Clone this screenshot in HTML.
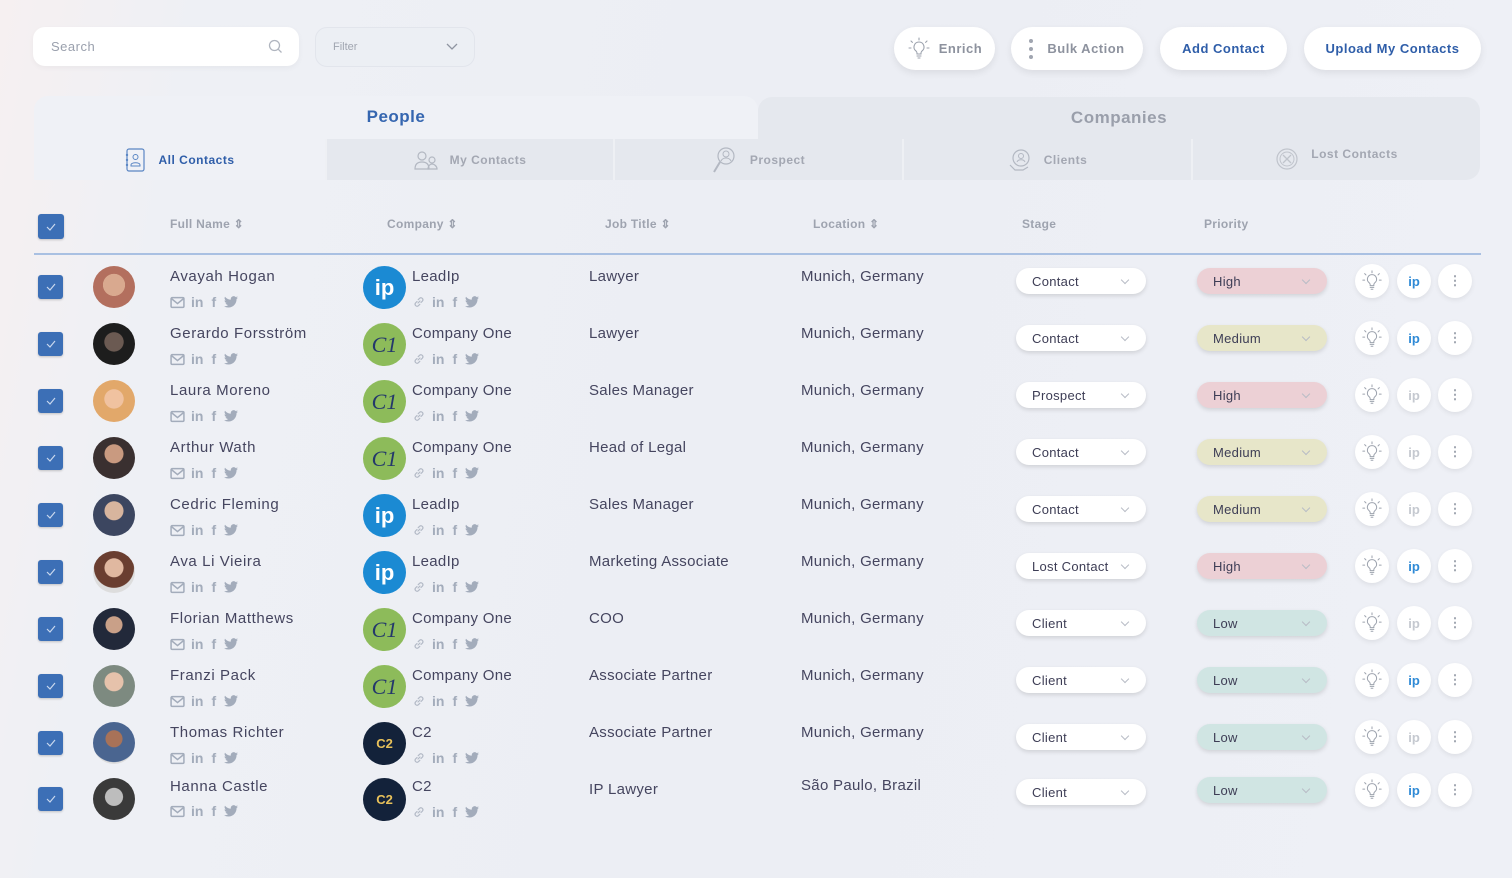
<!DOCTYPE html>
<html><head><meta charset="utf-8"><style>
*{box-sizing:border-box;margin:0;padding:0}
body{width:1512px;height:878px;overflow:hidden;font-family:"Liberation Sans",sans-serif;background:linear-gradient(100deg,#f6f0f1 0%,#eef0f5 12%,#eceef4 50%,#eef0f6 100%);position:relative;color:#3d3d55}
.abs{position:absolute}
.search{left:33px;top:27px;width:266px;height:39px;background:#fff;border-radius:12px;box-shadow:0 2px 6px rgba(0,0,0,.04)}
.search span{position:absolute;left:18px;top:12px;font-size:13px;color:#9aa0ad;letter-spacing:.5px}
.filter{left:315px;top:27px;width:160px;height:40px;border:1px solid #e2e5ec;border-radius:12px;background:#eceff4}
.filter span{position:absolute;left:17px;top:13px;font-size:11px;color:#a0a5b0}
.btn{top:27px;height:43px;background:#fff;border-radius:22px;box-shadow:0 3px 8px rgba(0,0,0,.08);font-size:13px;font-weight:bold;letter-spacing:.5px;display:flex;align-items:center;justify-content:center}
.tabs{left:34px;top:96px;width:1446px;height:84px}
.tp{left:34px;top:96px;width:724px;height:44px;background:#eff1f6;border-radius:14px 14px 0 0;text-align:center;font-size:17px;font-weight:bold;color:#3566b0;padding-top:11px;letter-spacing:.5px}
.tc{left:758px;top:97px;width:722px;height:43px;background:#e5e8ee;border-radius:14px 14px 0 0;text-align:center;font-size:17px;font-weight:bold;color:#9a9fab;padding-top:11px;letter-spacing:.5px}
.sub{top:139px;height:41px;background:#e5e8ee;border-left:2px solid #eef0f4;display:flex;align-items:center;justify-content:center;font-size:12px;font-weight:bold;color:#a3a7b2;letter-spacing:.5px;gap:12px}
.th{top:217px;font-size:12px;color:#9ea3af;font-weight:bold;letter-spacing:.3px}
.cb{width:25px;height:24px;background:#3c6fb6;border-radius:3px;display:flex;align-items:center;justify-content:center;box-shadow:0 1px 2px rgba(0,0,0,.2)}
.row{position:absolute;left:0;width:1512px;height:60px}
.row .cb{position:absolute;left:38px;top:16px}
.av{position:absolute;left:93px;top:7px;width:42px;height:42px;border-radius:50%}
.nm{position:absolute;left:170px;top:9px;font-size:15px;color:#45455f;letter-spacing:.6px}
.ic{position:absolute;top:35px;display:flex;align-items:center;gap:6px;color:#a3acbb;font-size:14px;font-weight:bold}
.lg{position:absolute;left:363px;top:7px;width:43px;height:43px;border-radius:50%;display:flex;align-items:center;justify-content:center;color:#fff;font-weight:bold}
.lp{background:#1b8ad3;font-size:22px}
.c1{background:#8dbb5a;color:#24386b;font-family:"Liberation Serif",serif;font-style:italic;font-size:22px;font-weight:normal}
.c2{background:#13223a;color:#e8c15a;font-size:13px}
.co{position:absolute;left:412px;top:9px;font-size:15px;color:#45455f;letter-spacing:.3px}
.jb{position:absolute;left:589px;top:9px;font-size:15px;color:#45455f;letter-spacing:.3px}
.lc{position:absolute;left:801px;top:9px;font-size:15px;color:#45455f;letter-spacing:.3px}
.pill{position:absolute;top:9px;width:130px;height:26px;border-radius:13px;box-shadow:0 2px 4px rgba(0,0,0,.12);font-size:13px;color:#3d3d55;padding:6px 0 0 16px;letter-spacing:.3px}
.pill:after{content:"";position:absolute;right:18px;top:9px;width:5px;height:5px;border-right:1px solid #b8bcc6;border-bottom:1px solid #b8bcc6;transform:rotate(45deg)}
.st{left:1016px;background:#fff}
.hi{left:1197px;background:#ecd0d5}
.me{left:1197px;background:#e7e6c9}
.lo{left:1197px;background:#d0e5e3}
.ac{position:absolute;top:5px;width:34px;height:34px;border-radius:50%;background:#fff;box-shadow:0 2px 5px rgba(0,0,0,.07);display:flex;align-items:center;justify-content:center;font-weight:bold;font-size:13px}
</style></head><body>
<svg width="0" height="0" style="position:absolute"><defs>
<symbol id="bulb" viewBox="0 0 24 24"><path d="M12 5a5 5 0 0 0-3 9c.7.6 1 1.3 1 2v1h4v-1c0-.7.3-1.4 1-2a5 5 0 0 0-3-9zM10 19h4M11 21h2M12 1v2M4 4l1.4 1.4M20 4l-1.4 1.4M2 11h2M20 11h2" fill="none" stroke="#9ca2ad" stroke-width="1.1" stroke-linecap="round"/></symbol>
<symbol id="env" viewBox="0 0 14 12"><rect x="1" y="1.5" width="12" height="9" rx="1" fill="none" stroke="#a3acbb" stroke-width="1.4"/><path d="M1.5 2.5L7 7l5.5-4.5" fill="none" stroke="#a3acbb" stroke-width="1.4"/></symbol>
<symbol id="lnk" viewBox="0 0 14 14"><path d="M6 8l2-2M5 6.5L3.5 8a2 2 0 0 0 2.8 2.8L7.8 9.3M9 7.5l1.5-1.5A2 2 0 0 0 7.7 3.2L6.2 4.7" fill="none" stroke="#b3bac6" stroke-width="1.2" stroke-linecap="round"/></symbol>
<symbol id="tw" viewBox="0 0 24 20"><path d="M24 2.4a10 10 0 0 1-2.8.8A5 5 0 0 0 23.3.4a9.8 9.8 0 0 1-3.1 1.2A4.9 4.9 0 0 0 11.8 6 14 14 0 0 1 1.7.9a4.9 4.9 0 0 0 1.5 6.6A4.9 4.9 0 0 1 1 6.9a4.9 4.9 0 0 0 3.9 4.8 5 5 0 0 1-2.2.1 4.9 4.9 0 0 0 4.6 3.4A9.9 9.9 0 0 1 0 17.3 14 14 0 0 0 7.5 19.5c9 0 14-7.5 14-14v-.6A10 10 0 0 0 24 2.4z" fill="#a3acbb"/></symbol>
<symbol id="chk" viewBox="0 0 12 10"><path d="M2 5l3 3 5-6" fill="none" stroke="#c9d8ee" stroke-width="1.2"/></symbol>
</defs></svg>

<div class="abs search"><span>Search</span><svg class="abs" style="left:235px;top:12px" width="15" height="15" viewBox="0 0 15 15"><circle cx="6.5" cy="6.5" r="5" fill="none" stroke="#b0b5bf" stroke-width="1.3"/><path d="M10.2 10.2L13.5 13.5" stroke="#b0b5bf" stroke-width="1.3"/></svg></div>
<div class="abs filter"><span>Filter</span><svg class="abs" style="left:130px;top:14px" width="12" height="10"><path d="M1 2l5 5 5-5" fill="none" stroke="#8f95a1" stroke-width="1.3"/></svg></div>

<div class="abs btn" style="left:894px;width:101px;color:#8d929e;gap:8px"><svg width="24" height="24"><use href="#bulb"/></svg>Enrich</div>
<div class="abs btn" style="left:1011px;width:132px;color:#8d929e;gap:14px"><svg width="4" height="22"><circle cx="2" cy="3" r="2" fill="#a0a5b0"/><circle cx="2" cy="11" r="2" fill="#a0a5b0"/><circle cx="2" cy="19" r="2" fill="#a0a5b0"/></svg>Bulk Action</div>
<div class="abs btn" style="left:1160px;width:127px;color:#2f5ea9">Add Contact</div>
<div class="abs btn" style="left:1304px;width:177px;color:#2f5ea9">Upload My Contacts</div>

<div class="abs tc">Companies</div>
<div class="abs tp">People</div>
<div class="abs sub" style="left:34px;width:291px;background:#eff1f6;border-left:none;color:#2f5ea9"><svg width="22" height="24" viewBox="0 0 22 24"><rect x="3" y="1" width="17" height="22" rx="2" fill="none" stroke="#5a86c4" stroke-width="1.2"/><circle cx="11.5" cy="9" r="2.5" fill="none" stroke="#5a86c4"/><path d="M7 17c0-3 9-3 9 0v1H7z" fill="none" stroke="#5a86c4"/><circle cx="3" cy="7" r="1.2" fill="#5a86c4"/><circle cx="3" cy="12" r="1.2" fill="#5a86c4"/><circle cx="3" cy="17" r="1.2" fill="#5a86c4"/></svg>All Contacts</div>
<div class="abs sub" style="left:325px;width:288px"><svg width="24" height="20" viewBox="0 0 24 20"><circle cx="8" cy="6" r="4" fill="none" stroke="#b3b8c2" stroke-width="1.2"/><path d="M1 19c0-5 3-7 7-7s7 2 7 7z" fill="none" stroke="#b3b8c2" stroke-width="1.2"/><circle cx="18" cy="10" r="3" fill="none" stroke="#b3b8c2" stroke-width="1.2"/><path d="M14 19c0-3 2-5 4-5s5 2 5 5z" fill="none" stroke="#b3b8c2" stroke-width="1.2"/></svg>My Contacts</div>
<div class="abs sub" style="left:613px;width:289px;gap:14px"><svg width="24" height="28" viewBox="0 0 24 28"><circle cx="14" cy="10" r="8" fill="none" stroke="#b3b8c2" stroke-width="1.2"/><circle cx="14" cy="8" r="3" fill="none" stroke="#b3b8c2"/><path d="M9 15c2-4 8-4 10 0" fill="none" stroke="#b3b8c2"/><path d="M8 16L2 26" stroke="#b3b8c2" stroke-width="2"/></svg>Prospect</div>
<div class="abs sub" style="left:902px;width:289px"><svg width="24" height="24" viewBox="0 0 24 24"><circle cx="13" cy="10" r="8" fill="none" stroke="#b3b8c2" stroke-width="1.2"/><circle cx="13" cy="8" r="2.5" fill="none" stroke="#b3b8c2"/><path d="M9 14c1-3 7-3 8 0" fill="none" stroke="#b3b8c2"/><path d="M2 17l5 5h8l5-3" fill="none" stroke="#b3b8c2" stroke-width="1.2"/></svg>Clients</div>
<div class="abs sub" style="left:1191px;width:289px;border-radius:0 0 14px 0;align-items:flex-start;padding-top:8px"><svg width="24" height="24" viewBox="0 0 24 24"><circle cx="12" cy="12" r="10" fill="none" stroke="#c0c4cc" stroke-width="1.2"/><circle cx="12" cy="12" r="7" fill="none" stroke="#c0c4cc"/><path d="M8 8l8 8M16 8l-8 8" stroke="#c0c4cc" stroke-width="1.3"/></svg>Lost Contacts</div>

<div class="abs cb" style="left:38px;top:214px;width:26px;height:25px"><svg width="12" height="10"><use href="#chk"/></svg></div>
<div class="abs th" style="left:170px">Full Name ⇕</div>
<div class="abs th" style="left:387px">Company ⇕</div>
<div class="abs th" style="left:605px">Job Title ⇕</div>
<div class="abs th" style="left:813px">Location ⇕</div>
<div class="abs th" style="left:1022px">Stage</div>
<div class="abs th" style="left:1204px">Priority</div>
<div class="abs" style="left:34px;top:253px;width:1447px;height:2px;background:#a9c0e2"></div>

<!-- rows -->
<div class="row" style="top:259px"><div class="cb"><svg width="12" height="10"><use href="#chk"/></svg></div><div class="av" style="background:radial-gradient(circle at 50% 45%,#d9a98f 0 35%,#b36f5e 36% 100%)"></div><div class="nm">Avayah Hogan</div><div class="ic" style="left:170px"><svg width="15" height="13"><use href="#env"/></svg>in<span style="margin:0 2px">f</span><svg width="14" height="12"><use href="#tw"/></svg></div><div class="lg lp">ip</div><div class="co">LeadIp</div><div class="ic" style="left:412px"><svg width="14" height="14"><use href="#lnk"/></svg>in<span style="margin:0 2px">f</span><svg width="14" height="12"><use href="#tw"/></svg></div><div class="jb">Lawyer</div><div class="lc">Munich, Germany</div><div class="pill st">Contact</div><div class="pill hi">High</div><div class="ac" style="left:1355px"><svg width="22" height="22"><use href="#bulb"/></svg></div><div class="ac" style="left:1397px;color:#2f8ad6">ip</div><div class="ac" style="left:1438px;color:#9ca2ad">⋮</div></div>

<div class="row" style="top:316px"><div class="cb"><svg width="12" height="10"><use href="#chk"/></svg></div><div class="av" style="background:radial-gradient(circle at 50% 45%,#6b5a52 0 30%,#1d1d1d 32% 100%)"></div><div class="nm">Gerardo Forsström</div><div class="ic" style="left:170px"><svg width="15" height="13"><use href="#env"/></svg>in<span style="margin:0 2px">f</span><svg width="14" height="12"><use href="#tw"/></svg></div><div class="lg c1">C1</div><div class="co">Company One</div><div class="ic" style="left:412px"><svg width="14" height="14"><use href="#lnk"/></svg>in<span style="margin:0 2px">f</span><svg width="14" height="12"><use href="#tw"/></svg></div><div class="jb">Lawyer</div><div class="lc">Munich, Germany</div><div class="pill st">Contact</div><div class="pill me">Medium</div><div class="ac" style="left:1355px"><svg width="22" height="22"><use href="#bulb"/></svg></div><div class="ac" style="left:1397px;color:#2f8ad6">ip</div><div class="ac" style="left:1438px;color:#9ca2ad">⋮</div></div>

<div class="row" style="top:373px"><div class="cb"><svg width="12" height="10"><use href="#chk"/></svg></div><div class="av" style="background:radial-gradient(circle at 50% 45%,#f0c2a0 0 30%,#e2a86a 32% 100%)"></div><div class="nm">Laura Moreno</div><div class="ic" style="left:170px"><svg width="15" height="13"><use href="#env"/></svg>in<span style="margin:0 2px">f</span><svg width="14" height="12"><use href="#tw"/></svg></div><div class="lg c1">C1</div><div class="co">Company One</div><div class="ic" style="left:412px"><svg width="14" height="14"><use href="#lnk"/></svg>in<span style="margin:0 2px">f</span><svg width="14" height="12"><use href="#tw"/></svg></div><div class="jb">Sales Manager</div><div class="lc">Munich, Germany</div><div class="pill st">Prospect</div><div class="pill hi">High</div><div class="ac" style="left:1355px"><svg width="22" height="22"><use href="#bulb"/></svg></div><div class="ac" style="left:1397px;color:#c5c9d0">ip</div><div class="ac" style="left:1438px;color:#9ca2ad">⋮</div></div>

<div class="row" style="top:430px"><div class="cb"><svg width="12" height="10"><use href="#chk"/></svg></div><div class="av" style="background:radial-gradient(circle at 50% 40%,#c99a80 0 28%,#3a3030 30% 100%)"></div><div class="nm">Arthur Wath</div><div class="ic" style="left:170px"><svg width="15" height="13"><use href="#env"/></svg>in<span style="margin:0 2px">f</span><svg width="14" height="12"><use href="#tw"/></svg></div><div class="lg c1">C1</div><div class="co">Company One</div><div class="ic" style="left:412px"><svg width="14" height="14"><use href="#lnk"/></svg>in<span style="margin:0 2px">f</span><svg width="14" height="12"><use href="#tw"/></svg></div><div class="jb">Head of Legal</div><div class="lc">Munich, Germany</div><div class="pill st">Contact</div><div class="pill me">Medium</div><div class="ac" style="left:1355px"><svg width="22" height="22"><use href="#bulb"/></svg></div><div class="ac" style="left:1397px;color:#c5c9d0">ip</div><div class="ac" style="left:1438px;color:#9ca2ad">⋮</div></div>

<div class="row" style="top:487px"><div class="cb"><svg width="12" height="10"><use href="#chk"/></svg></div><div class="av" style="background:radial-gradient(circle at 50% 40%,#d8b59e 0 28%,#3c4660 30% 100%)"></div><div class="nm">Cedric Fleming</div><div class="ic" style="left:170px"><svg width="15" height="13"><use href="#env"/></svg>in<span style="margin:0 2px">f</span><svg width="14" height="12"><use href="#tw"/></svg></div><div class="lg lp">ip</div><div class="co">LeadIp</div><div class="ic" style="left:412px"><svg width="14" height="14"><use href="#lnk"/></svg>in<span style="margin:0 2px">f</span><svg width="14" height="12"><use href="#tw"/></svg></div><div class="jb">Sales Manager</div><div class="lc">Munich, Germany</div><div class="pill st">Contact</div><div class="pill me">Medium</div><div class="ac" style="left:1355px"><svg width="22" height="22"><use href="#bulb"/></svg></div><div class="ac" style="left:1397px;color:#c5c9d0">ip</div><div class="ac" style="left:1438px;color:#9ca2ad">⋮</div></div>

<div class="row" style="top:544px"><div class="cb"><svg width="12" height="10"><use href="#chk"/></svg></div><div class="av" style="background:radial-gradient(circle at 50% 40%,#e0b8a0 0 28%,#6a3e30 30% 60%,#ddd 62%)"></div><div class="nm">Ava Li Vieira</div><div class="ic" style="left:170px"><svg width="15" height="13"><use href="#env"/></svg>in<span style="margin:0 2px">f</span><svg width="14" height="12"><use href="#tw"/></svg></div><div class="lg lp">ip</div><div class="co">LeadIp</div><div class="ic" style="left:412px"><svg width="14" height="14"><use href="#lnk"/></svg>in<span style="margin:0 2px">f</span><svg width="14" height="12"><use href="#tw"/></svg></div><div class="jb">Marketing Associate</div><div class="lc">Munich, Germany</div><div class="pill st">Lost Contact</div><div class="pill hi">High</div><div class="ac" style="left:1355px"><svg width="22" height="22"><use href="#bulb"/></svg></div><div class="ac" style="left:1397px;color:#2f8ad6">ip</div><div class="ac" style="left:1438px;color:#9ca2ad">⋮</div></div>

<div class="row" style="top:601px"><div class="cb"><svg width="12" height="10"><use href="#chk"/></svg></div><div class="av" style="background:radial-gradient(circle at 50% 40%,#c9a088 0 25%,#22293a 27% 100%)"></div><div class="nm">Florian Matthews</div><div class="ic" style="left:170px"><svg width="15" height="13"><use href="#env"/></svg>in<span style="margin:0 2px">f</span><svg width="14" height="12"><use href="#tw"/></svg></div><div class="lg c1">C1</div><div class="co">Company One</div><div class="ic" style="left:412px"><svg width="14" height="14"><use href="#lnk"/></svg>in<span style="margin:0 2px">f</span><svg width="14" height="12"><use href="#tw"/></svg></div><div class="jb">COO</div><div class="lc">Munich, Germany</div><div class="pill st">Client</div><div class="pill lo">Low</div><div class="ac" style="left:1355px"><svg width="22" height="22"><use href="#bulb"/></svg></div><div class="ac" style="left:1397px;color:#c5c9d0">ip</div><div class="ac" style="left:1438px;color:#9ca2ad">⋮</div></div>

<div class="row" style="top:658px"><div class="cb"><svg width="12" height="10"><use href="#chk"/></svg></div><div class="av" style="background:radial-gradient(circle at 50% 40%,#e6c2ab 0 28%,#7d8a80 30% 100%)"></div><div class="nm">Franzi Pack</div><div class="ic" style="left:170px"><svg width="15" height="13"><use href="#env"/></svg>in<span style="margin:0 2px">f</span><svg width="14" height="12"><use href="#tw"/></svg></div><div class="lg c1">C1</div><div class="co">Company One</div><div class="ic" style="left:412px"><svg width="14" height="14"><use href="#lnk"/></svg>in<span style="margin:0 2px">f</span><svg width="14" height="12"><use href="#tw"/></svg></div><div class="jb">Associate Partner</div><div class="lc">Munich, Germany</div><div class="pill st">Client</div><div class="pill lo">Low</div><div class="ac" style="left:1355px"><svg width="22" height="22"><use href="#bulb"/></svg></div><div class="ac" style="left:1397px;color:#2f8ad6">ip</div><div class="ac" style="left:1438px;color:#9ca2ad">⋮</div></div>

<div class="row" style="top:715px"><div class="cb"><svg width="12" height="10"><use href="#chk"/></svg></div><div class="av" style="background:radial-gradient(circle at 50% 40%,#a87258 0 25%,#4a6590 27% 70%,#ddd 72%)"></div><div class="nm">Thomas Richter</div><div class="ic" style="left:170px"><svg width="15" height="13"><use href="#env"/></svg>in<span style="margin:0 2px">f</span><svg width="14" height="12"><use href="#tw"/></svg></div><div class="lg c2">C2</div><div class="co">C2</div><div class="ic" style="left:412px"><svg width="14" height="14"><use href="#lnk"/></svg>in<span style="margin:0 2px">f</span><svg width="14" height="12"><use href="#tw"/></svg></div><div class="jb">Associate Partner</div><div class="lc">Munich, Germany</div><div class="pill st">Client</div><div class="pill lo">Low</div><div class="ac" style="left:1355px"><svg width="22" height="22"><use href="#bulb"/></svg></div><div class="ac" style="left:1397px;color:#c5c9d0">ip</div><div class="ac" style="left:1438px;color:#9ca2ad">⋮</div></div>

<div class="row" style="top:771px"><div class="cb"><svg width="12" height="10"><use href="#chk"/></svg></div><div class="av" style="background:radial-gradient(circle at 50% 45%,#bdbdbd 0 28%,#3a3a3a 30% 100%)"></div><div class="nm" style="top:7px">Hanna Castle</div><div class="ic" style="left:170px;top:32px"><svg width="15" height="13"><use href="#env"/></svg>in<span style="margin:0 2px">f</span><svg width="14" height="12"><use href="#tw"/></svg></div><div class="lg c2">C2</div><div class="co" style="top:7px">C2</div><div class="ic" style="left:412px;top:33px"><svg width="14" height="14"><use href="#lnk"/></svg>in<span style="margin:0 2px">f</span><svg width="14" height="12"><use href="#tw"/></svg></div><div class="jb" style="top:10px">IP Lawyer</div><div class="lc" style="top:6px">São Paulo, Brazil</div><div class="pill st" style="top:8px">Client</div><div class="pill lo" style="top:6px">Low</div><div class="ac" style="left:1355px;top:2px"><svg width="22" height="22"><use href="#bulb"/></svg></div><div class="ac" style="left:1397px;top:2px;color:#2f8ad6">ip</div><div class="ac" style="left:1438px;top:2px;color:#9ca2ad">⋮</div></div>
</body></html>
